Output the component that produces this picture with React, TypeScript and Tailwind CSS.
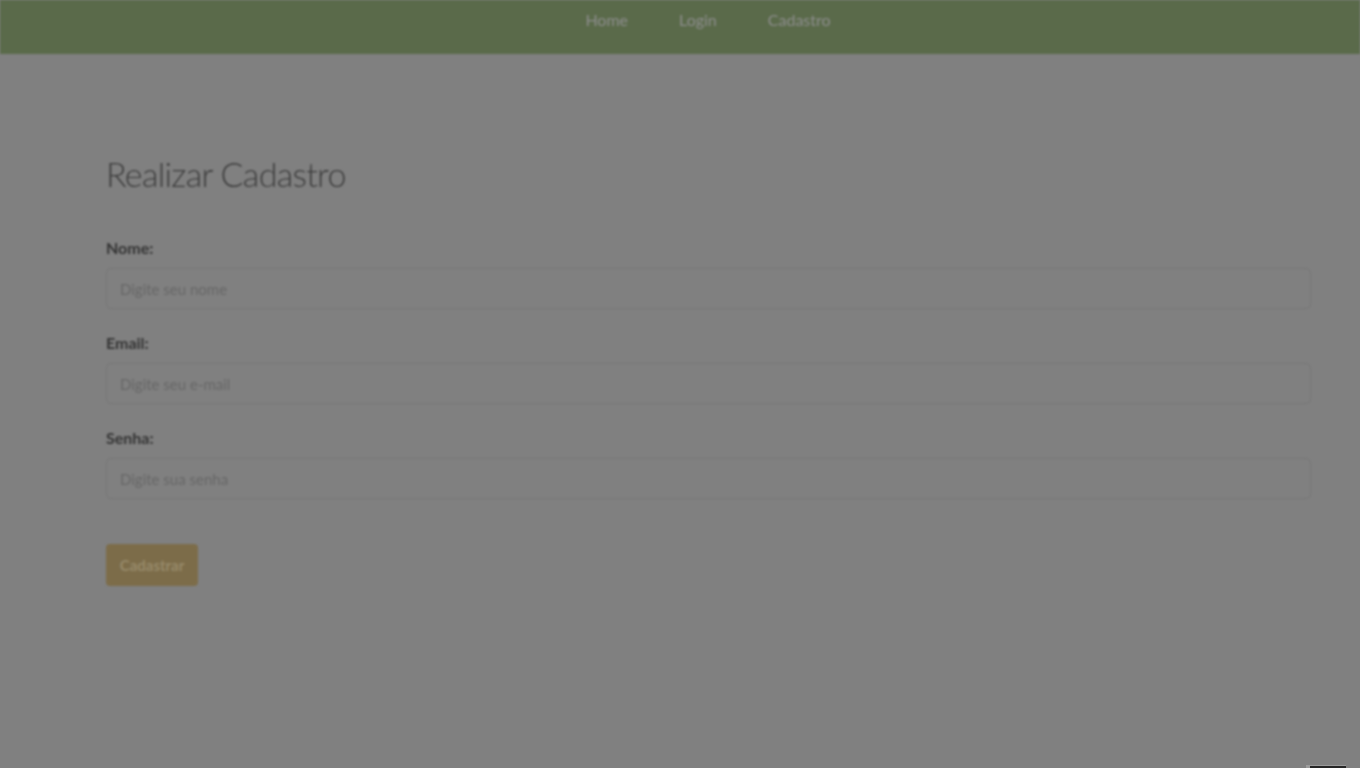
import { useState } from 'react';

const NAV = ['Home', 'Login', 'Cadastro'];

const FIELDS = [
    { id: 'nome', label: 'Nome:', type: 'text', placeholder: 'Digite seu nome' },
    { id: 'email', label: 'Email:', type: 'email', placeholder: 'Digite seu e-mail' },
    { id: 'senha', label: 'Senha:', type: 'password', placeholder: 'Digite sua senha' },
];

const App = () => {
    const [values, setValues] = useState<Record<string, string>>({});

    return (
        <div className="min-h-[768px] bg-[#808080] font-['Lato','Open_Sans',sans-serif] overflow-hidden">
            {/* page under the backdrop */}
            <div className="blur-[1.1px]">
                <nav className="h-[54px] bg-[#5a6a4a] flex justify-center items-start pt-[10px] pl-[56px] gap-[51px]">
                    {NAV.map((n) => (
                        <a key={n} href="#" className="text-[16px] text-[#8e8e8e] leading-[20px]">
                            {n}
                        </a>
                    ))}
                </nav>

                <main className="pl-[106px] pr-[49px] pt-[98px]">
                    <h1 className="text-[34px] leading-[44px] tracking-[-0.7px] text-[#3a3a3a] font-light">Realizar Cadastro</h1>

                    <form className="mt-[42px] flex flex-col gap-[24px]" onSubmit={(e) => e.preventDefault()}>
                        {FIELDS.map((f) => (
                            <div key={f.id} className="flex flex-col">
                                <label htmlFor={f.id} className="text-[16px] leading-[20px] font-bold text-[#333333] mb-[10px]">
                                    {f.label}
                                </label>
                                <input
                                    id={f.id}
                                    type={f.type}
                                    placeholder={f.placeholder}
                                    value={values[f.id] ?? ''}
                                    onChange={(e) => setValues((v) => ({ ...v, [f.id]: e.target.value }))}
                                    className="h-[41px] rounded-[5px] border border-[#757575] bg-[#808080] px-[13px] text-[15px] text-[#333] placeholder:text-[#666666] outline-none"
                                />
                            </div>
                        ))}

                        <div className="pt-[21px]">
                            <button
                                type="submit"
                                className="h-[42px] w-[92px] rounded-[4px] bg-[#7c6c49] text-[15px] font-bold text-[#978a6a]"
                            >
                                Cadastrar
                            </button>
                        </div>
                    </form>
                </main>
            </div>

            {/* widget peeking at the bottom edge */}
            <div className="fixed left-[1306px] top-[765px] w-[40px] h-[6px] border-l-[4px] border-t border-[#9a9a9a] bg-[#262626]" />
        </div>
    );
};

export default App;
